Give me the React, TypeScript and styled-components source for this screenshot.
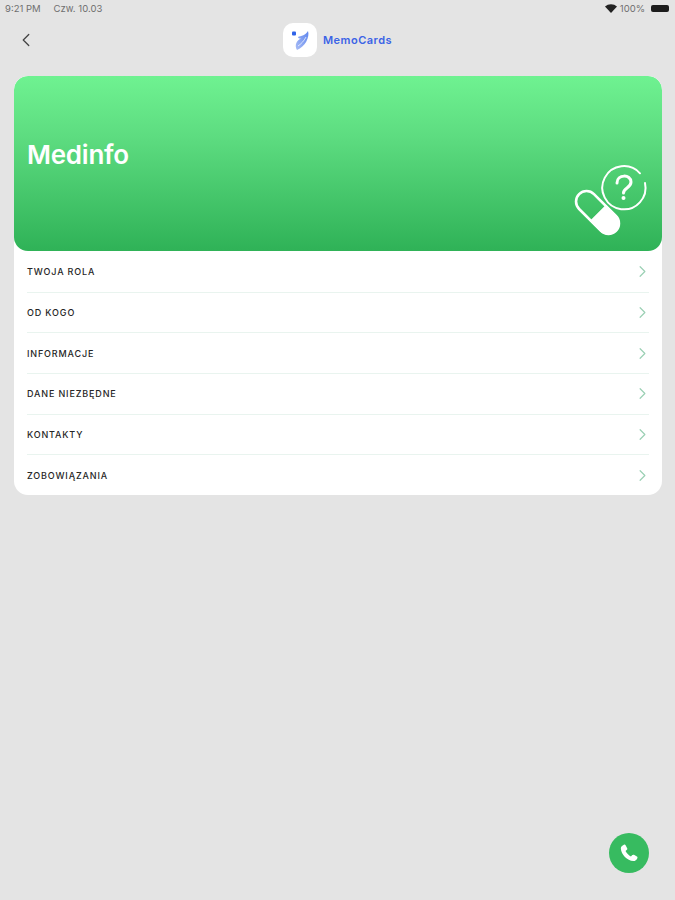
import React from "react";
import styled, { createGlobalStyle } from "styled-components";
import { ChevronRight, ChevronLeft } from "lucide-react";

const GlobalStyle = createGlobalStyle`
  html, body {
    margin: 0;
    padding: 0;
    background: #e4e4e4;
    font-family: Inter, "Liberation Sans", sans-serif;
  }
`;

const Page = styled.div`
  position: relative;
  width: 675px;
  height: 900px;
  overflow: hidden;
  background: #e4e4e4;
`;

const StatusBar = styled.div`
  display: flex;
  justify-content: space-between;
  align-items: center;
  height: 16px;
  padding: 0 5px 0 5px;
  font-size: 9.5px;
  color: #6f6f6f;
`;

const StatusGroup = styled.div`
  display: flex;
  align-items: center;
  gap: ${(p: { $gap: number }) => p.$gap}px;
`;

const Battery = styled.div`
  width: 18px;
  height: 7px;
  border-radius: 2px;
  background: #1c1c1c;
  margin-left: 3px;
  margin-right: 1px;
`;

const NavBar = styled.div`
  display: grid;
  grid-template-columns: 1fr auto 1fr;
  align-items: center;
  height: 34px;
  margin-top: 7px;
  padding-left: 15px;
`;

const BackButton = styled.div`
  display: flex;
  color: #444;
`;

const Brand = styled.div`
  display: flex;
  align-items: center;
  gap: 6px;
  padding-right: 15px;
`;

const LogoTile = styled.div`
  display: flex;
  align-items: center;
  justify-content: center;
  width: 34px;
  height: 34px;
  border-radius: 10px;
  background: #fff;
`;

const BrandName = styled.span`
  font-size: 11px;
  font-weight: 600;
  letter-spacing: 0.5px;
  color: #3b63e6;
`;

const Card = styled.div`
  margin: 19px 13px 0 14px;
  border-radius: 14px;
  background: #fff;
  overflow: hidden;
`;

const Hero = styled.div`
  display: flex;
  justify-content: space-between;
  height: 175px;
  border-radius: 14px;
  background: linear-gradient(180deg, #6ff291 0%, #5ddc80 35%, #2fb257 100%);
`;

const HeroTitle = styled.h1`
  margin: 63px 0 0 13px;
  font-size: 26px;
  line-height: 32px;
  font-weight: 600;
  letter-spacing: -0.25px;
  color: #fff;
`;

const HeroArt = styled.svg`
  margin: 88px 14px 0 0;
  overflow: visible;
`;

const MenuList = styled.ul`
  margin: 0;
  padding: 1px 13px 0;
  list-style: none;
`;

const MenuRow = styled.li`
  display: flex;
  justify-content: space-between;
  align-items: center;
  height: 40.7px;
  box-sizing: border-box;
  border-bottom: 1px solid #e9f4ef;
  font-size: 9px;
  font-weight: 500;
  letter-spacing: 0.85px;
  color: #262626;

  &:last-child {
    height: 39.7px;
    border-bottom: none;
  }

  svg {
    color: #9bd0b4;
    margin-right: -3px;
  }
`;

const CallButton = styled.div`
  position: absolute;
  left: 609px;
  top: 833px;
  display: flex;
  align-items: center;
  justify-content: center;
  width: 40px;
  height: 40px;
  border-radius: 50%;
  background: #37bb60;
`;

const items = [
  "TWOJA ROLA",
  "OD KOGO",
  "INFORMACJE",
  "DANE NIEZBĘDNE",
  "KONTAKTY",
  "ZOBOWIĄZANIA",
];

export default function App() {
  return (
    <Page>
      <GlobalStyle />
      <StatusBar>
        <StatusGroup $gap={13}>
          <span>9:21 PM</span>
          <span>Czw. 10.03</span>
        </StatusGroup>
        <StatusGroup $gap={3}>
          <svg width="12" height="9" viewBox="0 0 12 9">
            <path d="M6 9 L0 2.6 A8.6 8.6 0 0 1 12 2.6 Z" fill="#222" />
          </svg>
          <span>100%</span>
          <Battery />
        </StatusGroup>
      </StatusBar>
      <NavBar>
        <BackButton>
          <ChevronLeft size={22} strokeWidth={1.4} />
        </BackButton>
        <Brand>
          <LogoTile>
            <svg width="24" height="24" viewBox="0 0 24 24">
              <defs>
                <linearGradient id="feather" x1="1" y1="0" x2="0" y2="1">
                  <stop offset="0" stopColor="#5f86ee" />
                  <stop offset="1" stopColor="#a9bdf5" />
                </linearGradient>
              </defs>
              <rect x="4" y="3.5" width="4" height="4" rx="1" fill="#2f63e8" />
              <path d="M20 3 C22 9 17 19 9 22 C6 17 9 12 13 10.5 C11 10.8 10 10 10 9 C13 8 18 7 20 3 Z" fill="url(#feather)" />
              <path d="M10 18 C13 16 16 13 18 9" stroke="#fff" strokeWidth="0.7" fill="none" />
            </svg>
          </LogoTile>
          <BrandName>MemoCards</BrandName>
        </Brand>
      </NavBar>
      <Card>
        <Hero>
          <HeroTitle>Medinfo</HeroTitle>
          <HeroArt width="72" height="74" viewBox="0 0 72 74" fill="none">
            <path d="M64 9.3 A21.6 21.6 0 1 0 69 19" stroke="#fff" strokeWidth="2" strokeLinecap="round" />
            <path d="M41 19 C41 10 55 10 55 18 C55 24 47.5 24 47.5 29" stroke="#fff" strokeWidth="3" strokeLinecap="round" />
            <circle cx="47.5" cy="34" r="2" fill="#fff" />
            <g transform="rotate(45 21.5 48.5)">
              <rect x="-4.5" y="38" width="52" height="21" rx="10.5" stroke="#fff" strokeWidth="2.6" />
              <path d="M22 37 H36.5 A11.5 11.5 0 0 1 36.5 60 H22 Z" fill="#fff" />
            </g>
          </HeroArt>
        </Hero>
        <MenuList>
          {items.map((item) => (
            <MenuRow key={item}>
              {item}
              <ChevronRight size={19} strokeWidth={1.5} />
            </MenuRow>
          ))}
        </MenuList>
      </Card>
      <CallButton>
        <svg width="22" height="22" viewBox="0 0 24 24" fill="#fff">
          <path d="M6.4 3 C7.2 2.6 7.9 2.9 8.3 3.6 L10 6.7 C10.4 7.4 10.2 8 9.7 8.5 L8.2 9.9 C9.2 12 11.8 14.7 14.1 15.8 L15.6 14.3 C16.1 13.8 16.7 13.6 17.4 14 L20.6 15.8 C21.3 16.2 21.4 16.9 21.1 17.6 C20.2 19.5 18.6 20.9 16.8 20.8 C10 20.4 3.5 13.8 3.1 7.1 C3 5.4 4.6 3.8 6.4 3 Z" />
        </svg>
      </CallButton>
    </Page>
  );
}
